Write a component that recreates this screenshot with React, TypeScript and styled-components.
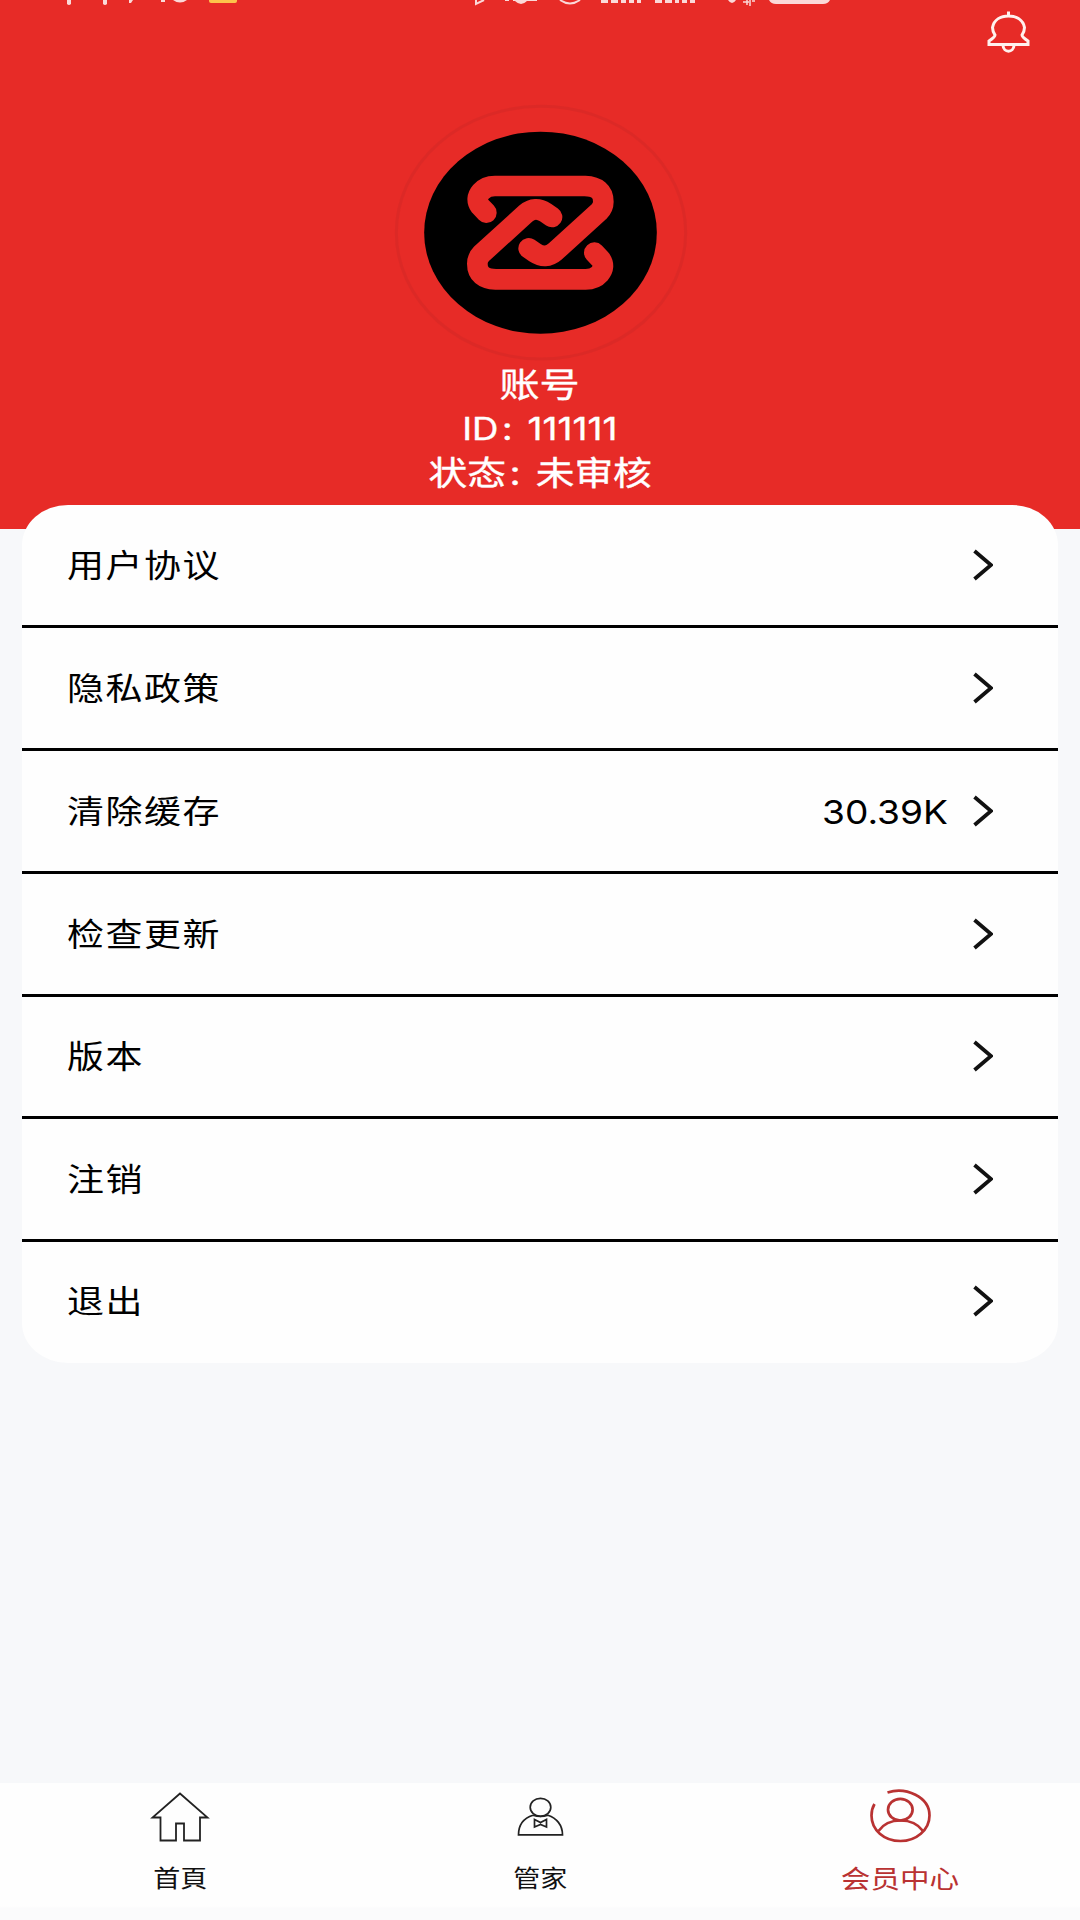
import React from "react";
import styled, { createGlobalStyle } from "styled-components";

const GlobalStyle = createGlobalStyle`
  * { box-sizing: border-box; }
  body {
    margin: 0;
    background: #f7f8fa;
    font-family: Inter, "Noto Sans CJK SC", sans-serif;
  }
`;

const Screen = styled.div`
  width: 1080px;
  height: 1920px;
  display: flex;
  flex-direction: column;
  background: #f7f8fa;
  overflow: hidden;
`;

const Header = styled.header`
  height: 529px;
  flex: none;
  display: flex;
  flex-direction: column;
  align-items: center;
  background: #e72b27;
  color: #fff;
`;

const StatusBar = styled.svg`
  width: 1080px;
  height: 8px;
  flex: none;
  display: block;
`;

const Toolbar = styled.div`
  width: 100%;
  height: 82px;
  flex: none;
  display: flex;
  justify-content: flex-end;
  padding: 3px 50px 0 0;
`;

const BellIcon = styled.svg`
  width: 44px;
  height: 44px;
`;

const Logo = styled.svg`
  width: 320px;
  height: 280px;
  flex: none;
  display: block;
`;

const Profile = styled.div`
  margin-top: -8px;
  display: flex;
  flex-direction: column;
  align-items: center;
`;

const ProfileLine = styled.div<{ $size?: number }>`
  height: 44.6px;
  display: flex;
  align-items: center;
  font-size: ${(p) => p.$size ?? 33.4}px;
  line-height: 44px;
  white-space: pre;
  transform: scaleX(1.16);
  -webkit-text-stroke: 0.4px #fff;
`;

const Colon = styled.span<{ $width: number }>`
  width: ${(p) => p.$width}px;
  padding-left: 3px;
`;

const Digits = styled.span`
  letter-spacing: 0.1px;
`;

const Card = styled.main`
  margin: -24.5px 22px 0;
  padding-top: 1px;
  flex: none;
  background: #fefefe;
  border-radius: 46px / 40px;
  overflow: hidden;
`;

const Row = styled.div`
  height: 122.75px;
  display: flex;
  align-items: center;
  padding: 2px 65px 0 45px;
  border-bottom: 3px solid #000;
  color: #000;
  &:last-child {
    height: 121px;
    border-bottom-color: transparent;
  }
`;

const RowLabel = styled.span`
  flex: 1;
  font-size: 32px;
  line-height: 44px;
  letter-spacing: 1.3px;
  transform: scaleX(1.155);
  transform-origin: left center;
`;

const RowValue = styled.span`
  font-size: 33px;
  line-height: 44px;
  margin-right: 25px;
  transform: scaleX(1.125);
  transform-origin: right center;
`;

const Chevron = styled.svg`
  width: 20px;
  height: 32px;
  margin-top: -2px;
`;

const Spacer = styled.div`
  flex: 1;
`;

const TabBar = styled.nav`
  height: 137px;
  flex: none;
  display: grid;
  grid-template-columns: repeat(3, 1fr);
  background: linear-gradient(#fefefe 0 123px, #fbfbfc 125px);
`;

const Tab = styled.div<{ $active?: boolean }>`
  display: flex;
  flex-direction: column;
  align-items: center;
  color: ${(p) => (p.$active ? "#b93232" : "#111")};
`;

const TabIcon = styled.svg`
  width: 64px;
  height: 70px;
  display: block;
`;

const TabLabel = styled.span<{ $size: number }>`
  margin-top: 8px;
  height: 36px;
  font-size: ${(p) => p.$size}px;
  line-height: 35px;
  transform: scaleX(1.16);
`;

const MENU: { label: string; value?: string }[] = [
  { label: "用户协议" },
  { label: "隐私政策" },
  { label: "清除缓存", value: "30.39K" },
  { label: "检查更新" },
  { label: "版本" },
  { label: "注销" },
  { label: "退出" },
];

const LOGO_STROKE =
  "M319 368L300 348Q285 326 303 305Q318 288 345 288L615 288Q670 290 670 335Q670 352 657 365L525 485Q497 509 465 488L446 475";

export default function App() {
  return (
    <Screen>
      <GlobalStyle />
      <Header>
        <StatusBar viewBox="0 0 1080 8" fill="#fbd9d8">
          <path d="M67 0h4v4q-2 2-4 0zM103 0h4v4q-2 2-4 0zM129 0h4l-2 3h-2zM161 0h4v2h-4z" />
          <path d="M173 0h14q-7 5-14 0z" />
          <path d="M209 0h28v1q0 2-2 2h-24q-2 0-2-2z" fill="#fdc34b" />
          <path d="M476 0v4l8-4M505 0h4M513 0h24M560 0q10 7 20 0" fill="none" stroke="#fbd9d8" strokeWidth="2" />
          <path d="M515 1q6 6 12 0z" />
          <path d="M601 0h7v3h-7zM611 0h7v3h-7zM621 0h5v3h-5zM629 0h5v3h-5zM637 0h4v3h-4z" />
          <path d="M655 0h7v3h-7zM665 0h7v3h-7zM675 0h4v3h-4zM682 0h5v3h-5zM690 0h5v3h-5z" />
          <path d="M728 0h8q-4 6-8 0z" />
          <path d="M743 2h6M747 0v5M750 0v6M752 1h3" fill="none" stroke="#fbd9d8" strokeWidth="1.5" />
          <path d="M769 0h61q-2 4-7 4h-47q-5 0-7-4z" />
        </StatusBar>
        <Toolbar>
          <BellIcon viewBox="0 0 44 44" fill="none" stroke="#fff1ee" strokeWidth="3">
            <path d="M22.500 0.500v4M3 33.500V30Q9 26 9 24Q6.500 20 6.500 16.500C8 8.500 15 5 22.500 5S37 8.500 38.500 16.500Q38.500 20 36 24Q36 26 42 30V33.500Z" />
            <path d="M17 34.500C17.500 42 27.500 42 28 34.500" />
          </BellIcon>
        </Toolbar>
        <Logo viewBox="0 0 960 840">
          <ellipse cx="483" cy="428" rx="434" ry="379" fill="none" stroke="#d82a27" strokeWidth="9" opacity="0.75" />
          <ellipse cx="481.500" cy="428" rx="349" ry="303" fill="#000" />
          <g fill="none" stroke="#e72b27" strokeWidth="62" strokeLinecap="round" strokeLinejoin="round">
            <path d={LOGO_STROKE} />
            <path d={LOGO_STROKE} transform="rotate(180 481 428)" />
          </g>
        </Logo>
        <Profile>
          <ProfileLine $size={34.6}>账号</ProfileLine>
          <ProfileLine $size={31.5}>
            <span>ID</span>
            <Colon $width={25}>:</Colon>
            <Digits>111111</Digits>
          </ProfileLine>
          <ProfileLine>
            <span>状态</span>
            <Colon $width={25.5}>:</Colon>
            <span>未审核</span>
          </ProfileLine>
        </Profile>
      </Header>

      <Card>
        {MENU.map((item) => (
          <Row key={item.label}>
            <RowLabel>{item.label}</RowLabel>
            {item.value && <RowValue>{item.value}</RowValue>}
            <Chevron viewBox="0 0 20 32" fill="none" stroke="#111" strokeWidth="3.800">
              <path d="M1.500 2L18 16L1.500 30" />
            </Chevron>
          </Row>
        ))}
      </Card>

      <Spacer />

      <TabBar>
        <Tab>
          <TabIcon viewBox="0 0 64 70" fill="none" stroke="#222" strokeWidth="1.800">
            <path d="M32 10.500L4.500 34.500H12.500V57.500H28V40.500H36V57.500H52V34.500H59.500Z" />
          </TabIcon>
          <TabLabel $size={23.3}>首頁</TabLabel>
        </Tab>
        <Tab>
          <TabIcon viewBox="0 0 64 70" fill="none" stroke="#222" strokeWidth="1.700">
            <ellipse cx="32.500" cy="24.300" rx="10.300" ry="9" />
            <path d="M25 32.200C16 35 10.500 42 10.500 51.800H54.500C54.500 42 48.500 35 40 32.200Q32.500 34.500 25 32.200" />
            <path d="M26.500 36.500L32.500 39.500L38.500 36.500V44L32.500 41.500L26.500 44Z" />
          </TabIcon>
          <TabLabel $size={23.3}>管家</TabLabel>
        </Tab>
        <Tab $active>
          <TabIcon viewBox="0 0 64 70" fill="none" stroke="#b93232" strokeWidth="2.700">
            <path d="M19.500 9.500C38 3.500 61.500 14 61.500 32.500C61.500 47 48 58 32.500 58C16 58 3.500 47 3.500 32.500Q3.500 26 6.500 21" />
            <ellipse cx="32.300" cy="26.700" rx="12.300" ry="10.800" />
            <path d="M10.500 48C20 34 45 34 55 48" />
          </TabIcon>
          <TabLabel $size={25.5}>会员中心</TabLabel>
        </Tab>
      </TabBar>
    </Screen>
  );
}
